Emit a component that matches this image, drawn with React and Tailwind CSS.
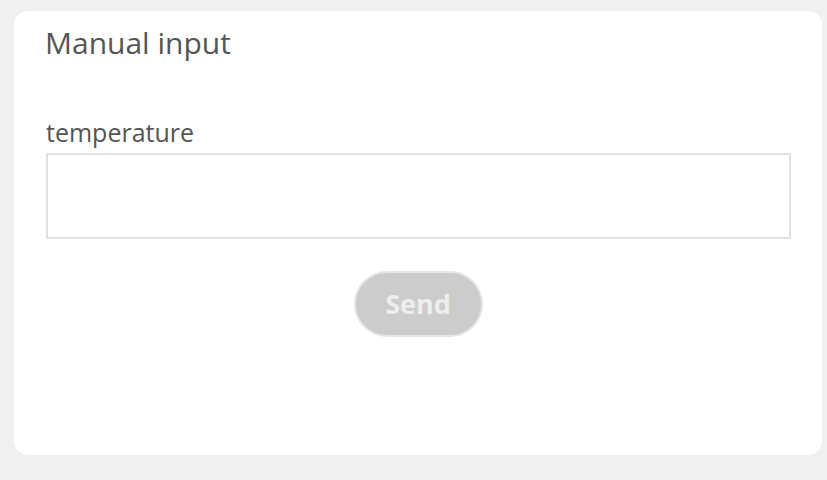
import React, { useState } from "react";

export default function App() {
  const [temperature, setTemperature] = useState("");

  return (
    <div className="min-h-screen w-full bg-[#f0f0f0] pt-[11px] pl-[14px] pr-[5px] pb-[26px]" style={{ fontFamily: "'Open Sans', Lato, sans-serif" }}>
      <div className="h-[444px] rounded-[14px] bg-white pl-[31px] pr-[31px]">
        {/* TITLE */}
        <h1 className="pt-[12px] text-[30px] leading-[40px] text-[#555555]">Manual input</h1>

        {/* FIELD */}
        <div className="mt-[52px]">
          <label className="block text-[25px] leading-[34px] text-[#555555] pl-[1px]">temperature</label>
          <input
            type="text"
            value={temperature}
            onChange={(e) => setTemperature(e.target.value)}
            className="mt-[4px] ml-[1px] block h-[86px] w-[calc(100%-1px)] border-2 border-[#e2e2e2] px-3 text-xl outline-none"
          />
        </div>

        {/* BUTTON */}
        <div className="mt-[32px] flex justify-center">
          <button
            type="button"
            disabled
            className="h-[66px] w-[129px] rounded-full border-2 border-[#e6e6e6] bg-[#cccccc] text-[27px] font-bold text-[#eeeeee]"
          >
            Send
          </button>
        </div>
      </div>
    </div>
  );
}
